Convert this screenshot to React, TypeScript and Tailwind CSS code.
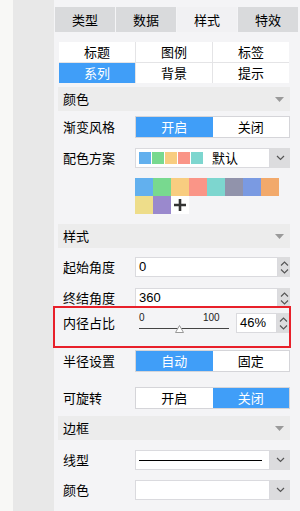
import React from "react";

const cjk = { fontFamily: '"Noto Sans CJK SC", "Liberation Sans", sans-serif' };
const lat = { fontFamily: '"Liberation Sans", "Noto Sans CJK SC", sans-serif' };

function Tri() {
  return (
    <svg width="9" height="5" viewBox="0 0 9 5" className="mr-[6px]">
      <path d="M0 0 L9 0 L4.5 5 Z" fill="#9a9a9a" />
    </svg>
  );
}

function Header({ title }: { title: string }) {
  return (
    <div className="ml-[4px] w-[232px] h-[24px] bg-[#ececec] flex items-center justify-between pl-[5px] text-[13px] text-black">
      <span>{title}</span>
      <Tri />
    </div>
  );
}

function Row({ label, children, className = "" }: { label: string; children: React.ReactNode; className?: string }) {
  return (
    <div className={"ml-[4px] w-[232px] flex items-center " + className}>
      <div className="w-[77px] pl-[5px] text-[13px] text-black">{label}</div>
      <div className="w-[155px]">{children}</div>
    </div>
  );
}

function Toggle({ left, right, active }: { left: string; right: string; active: 0 | 1 }) {
  return (
    <div className="flex h-[22px] border border-[#d5d5d9] bg-white text-[13px]">
      <div className={"flex-1 flex items-center justify-center " + (active === 0 ? "bg-[#409ef8] text-white" : "text-black")}>{left}</div>
      <div className={"flex-1 flex items-center justify-center " + (active === 1 ? "bg-[#409ef8] text-white" : "text-black")}>{right}</div>
    </div>
  );
}

function Chevron() {
  return (
    <svg width="9" height="6" viewBox="0 0 9 6">
      <path d="M1 1 L4.5 4.5 L8 1" stroke="#555" strokeWidth="1.2" fill="none" />
    </svg>
  );
}

function DropBtn() {
  return (
    <div className="w-[20px] h-full bg-[#dcdcde] flex items-center justify-center">
      <Chevron />
    </div>
  );
}

function Spinner() {
  return (
    <div className="w-[12px] h-full bg-[#dcdcde] flex flex-col items-center justify-center gap-[3px]">
      <svg width="9" height="5" viewBox="0 0 9 5">
        <path d="M1 4.5 L4.5 1 L8 4.5" stroke="#555" strokeWidth="1.1" fill="none" />
      </svg>
      <svg width="9" height="5" viewBox="0 0 9 5">
        <path d="M1 0.5 L4.5 4 L8 0.5" stroke="#555" strokeWidth="1.1" fill="none" />
      </svg>
    </div>
  );
}

function NumInput({ value }: { value: string }) {
  return (
    <div className="flex h-[20px]">
      <div className="flex-1 border border-[#dadade] bg-white flex items-center pl-[3px] text-[13px] text-black" style={lat}>
        {value}
      </div>
      <Spinner />
    </div>
  );
}

const small = ["#62b0ee", "#78d98f", "#f8cd80", "#fa9587", "#7dd6cf"];
const grid1 = ["#62b0ee", "#78d98f", "#f8cd80", "#fa9587", "#7dd6cf", "#9193ab", "#7a9ae2", "#f2a96b"];

export default function App() {
  return (
    <div className="flex w-[300px] h-[511px] overflow-hidden" style={cjk}>
      <div className="w-[13px] h-full bg-[#f8f8f6]" />
      <div className="w-[41px] h-full bg-[#e8e8e8]" />
      <div className="relative w-[246px] h-full bg-[#f4f4f6] flex flex-col">
        {/* top tabs */}
        <div className="mt-[7px] pl-px flex gap-px h-[25px] text-[13px] text-black">
          <div className="w-[60px] bg-[#d9dadc] flex items-center justify-center">类型</div>
          <div className="w-[60px] bg-[#d9dadc] flex items-center justify-center">数据</div>
          <div className="w-[60px] bg-[#f1f1f3] flex items-center justify-center">样式</div>
          <div className="w-[60px] bg-[#d9dadc] flex items-center justify-center">特效</div>
        </div>
        {/* sub tabs */}
        <div className="mt-[10px] ml-[5px] w-[230px] grid grid-cols-3 gap-px text-[13px] bg-[#e4e4e6]">
          <div className="h-[20px] bg-white flex items-center justify-center text-black">标题</div>
          <div className="h-[20px] bg-white flex items-center justify-center text-black">图例</div>
          <div className="h-[20px] bg-white flex items-center justify-center text-black">标签</div>
          <div className="h-[20px] bg-[#409ef8] flex items-center justify-center text-white">系列</div>
          <div className="h-[20px] bg-white flex items-center justify-center text-black">背景</div>
          <div className="h-[20px] bg-white flex items-center justify-center text-black">提示</div>
        </div>

        <div className="mt-[4px]">
          <Header title="颜色" />
        </div>
        <Row label="渐变风格" className="mt-[5px]">
          <Toggle left="开启" right="关闭" active={0} />
        </Row>
        <Row label="配色方案" className="mt-[10px]">
          <div className="flex h-[20px]">
            <div className="flex-1 border border-[#dadade] bg-white flex items-center pl-[3px]">
              <div className="flex gap-px">
                {small.map((c) => (
                  <div key={c} className="w-[12px] h-[12px]" style={{ backgroundColor: c }} />
                ))}
              </div>
              <span className="ml-[9px] text-[13px] text-black">默认</span>
            </div>
            <DropBtn />
          </div>
        </Row>
        <Row label="" className="mt-[10px]">
          <div className="flex flex-col">
            <div className="flex">
              {grid1.map((c) => (
                <div key={c} className="w-[18px] h-[18px]" style={{ backgroundColor: c }} />
              ))}
            </div>
            <div className="flex">
              <div className="w-[18px] h-[18px] bg-[#eedd8a]" />
              <div className="w-[18px] h-[18px] bg-[#9a89cd]" />
              <div className="w-[18px] h-[18px] bg-white flex items-center justify-center">
                <svg width="14" height="14" viewBox="0 0 14 14">
                  <path d="M7 1 V13 M1 7 H13" stroke="#333" strokeWidth="2.6" />
                </svg>
              </div>
            </div>
          </div>
        </Row>

        <div className="mt-[10px]">
          <Header title="样式" />
        </div>
        <Row label="起始角度" className="mt-[9px]">
          <NumInput value="0" />
        </Row>
        <Row label="终结角度" className="mt-[11px]">
          <NumInput value="360" />
        </Row>
        <Row label="内径占比" className="mt-[5px]">
          <div className="flex items-center h-[20px]">
            <div className="relative w-[96px] h-[20px] ml-[4px]">
              <span className="absolute left-0 top-[-3px] text-[10px] text-[#222]" style={lat}>0</span>
              <span className="absolute left-[64px] top-[-3px] text-[10px] text-[#222]" style={lat}>100</span>
              <div className="absolute left-0 top-[15px] w-[90px] h-px bg-[#444]" />
              <svg width="9" height="8" viewBox="0 0 9 8" className="absolute left-[36px] top-[12px]">
                <path d="M4.5 0.5 L8.5 7.5 L0.5 7.5 Z" fill="#fff" stroke="#999" strokeWidth="1" />
              </svg>
            </div>
            <div className="ml-[1px] w-[41px] h-[20px] border border-[#dadade] bg-white flex items-center pl-[3px] text-[13px] text-black" style={lat}>
              46%
            </div>
            <Spinner />
          </div>
        </Row>
        <Row label="半径设置" className="mt-[17px]">
          <Toggle left="自动" right="固定" active={0} />
        </Row>
        <Row label="可旋转" className="mt-[15px]">
          <Toggle left="开启" right="关闭" active={1} />
        </Row>
        <div className="mt-[7px]">
          <Header title="边框" />
        </div>
        <Row label="线型" className="mt-[10px]">
          <div className="flex h-[20px]">
            <div className="flex-1 border border-[#dadade] bg-white flex items-center pl-[3px] pr-[7px]">
              <div className="w-full h-px bg-black" />
            </div>
            <DropBtn />
          </div>
        </Row>
        <Row label="颜色" className="mt-[10px]">
          <div className="flex h-[20px]">
            <div className="flex-1 border border-[#dadade] bg-white" />
            <DropBtn />
          </div>
        </Row>

        {/* red annotation box */}
        <div className="absolute left-[-1px] top-[306px] w-[238px] h-[42px] border-2 border-[#e8202a] pointer-events-none" />
      </div>
    </div>
  );
}
